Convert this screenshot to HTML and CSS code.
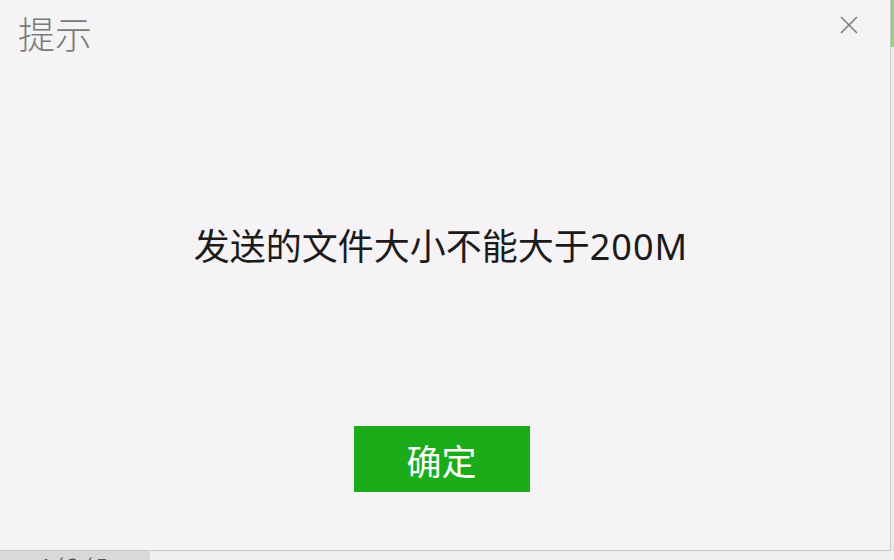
FILE: index.html
```html
<!DOCTYPE html>
<html lang="zh-CN">
<head>
<meta charset="utf-8">
<title>提示</title>
<link rel="stylesheet" href="styles.css">
</head>
<body>
<div class="screen">
  <div class="top">
    <div class="dialog">
      <div class="header">
        <div class="title">提示</div>
        <button class="close" aria-label="关闭">
          <svg width="18" height="18" viewBox="0 0 18 18"><path d="M1 1L17 17M17 1L1 17" stroke="#7d7d7d" stroke-width="1.6" fill="none"/></svg>
        </button>
      </div>
      <div class="message">发送的文件大小不能大于<span class="num">200M</span></div>
      <div class="actions">
        <button class="ok">确定</button>
      </div>
    </div>
    <div class="side">
      <div class="side-green"></div>
    </div>
  </div>
  <div class="bottom">
    <div class="bottom-left">4/3/5</div>
    <div class="bottom-right"></div>
  </div>
</div>
</body>
</html>
```
FILE: styles.css
```css
* { box-sizing: border-box; }
html, body { margin: 0; padding: 0; }
body {
  width: 894px;
  height: 560px;
  overflow: hidden;
  font-family: "Noto Sans CJK SC", "Noto Sans", sans-serif;
  background: #efefef;
}
.screen {
  display: flex;
  flex-direction: column;
  height: 560px;
}
.top {
  display: flex;
  height: 551px;
}
.dialog {
  width: 891px;
  height: 551px;
  background: #f5f3f5;
  border-right: 1px solid #c9c9c9;
  border-bottom: 1px solid #c9c9c9;
  display: flex;
  flex-direction: column;
}
.header {
  display: flex;
  justify-content: space-between;
  align-items: flex-start;
  padding: 8px 0 0 18px;
  height: 70px;
}
.title {
  font-size: 37px;
  line-height: 50px;
  color: #7a7a7a;
  font-weight: 300;
}
.close {
  border: 0;
  background: transparent;
  padding: 0;
  margin: 8px 32px 0 0;
  width: 18px;
  height: 18px;
}
.close svg { display: block; }
.message {
  margin-top: 150px;
  text-align: center;
  font-size: 36px;
  line-height: 48px;
  color: #1b1b1b;
  padding-right: 8px;
}
.num {
  font-family: "Noto Sans", sans-serif;
  letter-spacing: 1px;
}
.actions {
  display: flex;
  justify-content: center;
  margin-top: 155px;
  padding-right: 7px;
}
.ok {
  width: 176px;
  height: 66px;
  border: 0;
  background: #1aad19;
  color: #ffffff;
  font-family: "Noto Sans CJK SC", sans-serif;
  font-size: 35px;
  padding: 0;
}
.side {
  flex: 1;
  background: #ececec;
}
.side-green {
  height: 47px;
  background: #8fd27a;
}
.bottom {
  flex: 1;
  display: flex;
}
.bottom-left {
  width: 150px;
  background: #d9d9d9;
  color: #555;
  font-size: 22px;
  line-height: 28px;
  padding: 0 0 0 34px;
  font-style: italic;
  letter-spacing: 4px;
  overflow: hidden;
}
.bottom-right {
  flex: 1;
  background: #f0f0f0;
}
```
